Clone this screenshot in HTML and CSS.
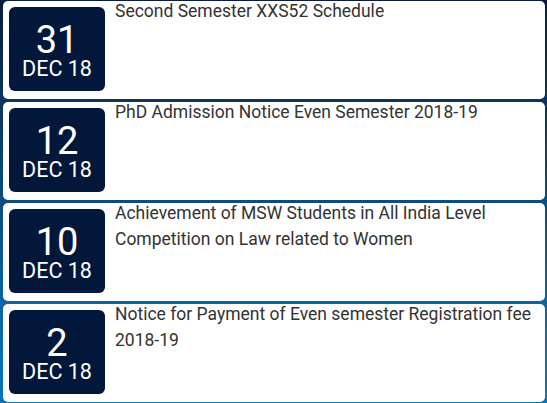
FILE: index.html
```html
<!DOCTYPE html>
<html>
<head>
<meta charset="utf-8">
<link rel="stylesheet" href="styles.css">
</head>
<body>
<div class="list">
  <div class="card">
    <div class="date"><span class="day">31</span><span class="mon">DEC 18</span></div>
    <div class="title">Second Semester XXS52 Schedule</div>
  </div>
  <div class="card">
    <div class="date"><span class="day">12</span><span class="mon">DEC 18</span></div>
    <div class="title">PhD Admission Notice Even Semester 2018-19</div>
  </div>
  <div class="card">
    <div class="date"><span class="day">10</span><span class="mon">DEC 18</span></div>
    <div class="title">Achievement of MSW Students in All India Level Competition on Law related to Women</div>
  </div>
  <div class="card">
    <div class="date"><span class="day">2</span><span class="mon">DEC 18</span></div>
    <div class="title">Notice for Payment of Even semester Registration fee 2018-19</div>
  </div>
</div>
</body>
</html>
```
FILE: styles.css
```css
html, body {
  margin: 0;
  height: 100%;
}
body {
  background: linear-gradient(to bottom, #0a1d3a 0%, #0d3e6a 35%, #0a6aa8 80%, #0b74b8 100%);
  font-family: Roboto, "Liberation Sans", sans-serif;
  overflow: hidden;
}
.list {
  display: flex;
  flex-direction: column;
  gap: 3px;
  padding: 1px 2px 0 3px;
}
.card {
  display: flex;
  align-items: flex-start;
  background: #fff;
  border-radius: 5px;
  height: 98px;
  box-sizing: border-box;
}
.date {
  flex: 0 0 96px;
  height: 84px;
  margin: 6px 10px 0 6px;
  background: #02173a;
  border-radius: 6px;
  color: #fff;
  display: flex;
  flex-direction: column;
  align-items: center;
  justify-content: center;
  padding-top: 3px;
  box-sizing: border-box;
}
.day {
  font-size: 38px;
  line-height: 36px;
}
.mon {
  font-size: 21.5px;
  line-height: 22px;
}
.title {
  font-size: 17.5px;
  line-height: 26px;
  color: #333;
  margin-top: -3px;
  padding-right: 8px;
}
```
